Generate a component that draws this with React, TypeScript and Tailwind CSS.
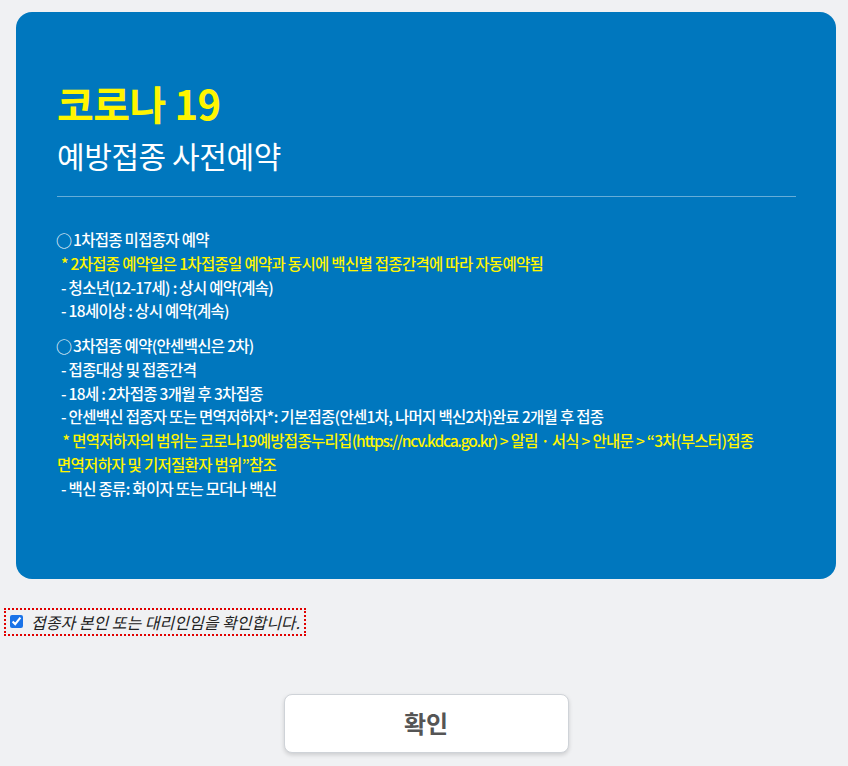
import React, { useState } from 'react';

const font = { fontFamily: '"Noto Sans CJK KR", "Noto Sans", sans-serif' };

function Circle() {
  return <span className="mr-px inline-block text-[16px] leading-none tracking-normal font-normal align-[-1px]">○</span>;
}

export default function App() {
  const [checked, setChecked] = useState(true);

  return (
    <div className="min-h-[766px] bg-[#f0f1f3] pt-3" style={font}>
      <div className="ml-4 mr-3 rounded-2xl bg-[#0077be] pl-[40px] pr-10 pt-[67px] pb-[79px]">
        <h1 className="pl-px text-[40px] font-bold leading-[48px] text-[#fff500] tracking-[-0.5px]">코로나 19</h1>
        <h2 className="mt-[8px] pl-px text-[30px] font-normal leading-[40px] text-white tracking-[-0.4px]">예방접종 사전예약</h2>
        <div className="ml-px mt-[21px] h-px bg-white/40" />

        <div className="mt-[31px] text-[15.5px] font-medium leading-[23.75px] tracking-[-0.7px] text-white">
          <p><Circle />1차접종 미접종자 예약</p>
          <p className="pl-[5px] text-[#fff500]">* 2차접종 예약일은 1차접종일 예약과 동시에 백신별 접종간격에 따라 자동예약됨</p>
          <p className="pl-[5px]">- 청소년(12-17세) : 상시 예약(계속)</p>
          <p className="pl-[5px]">- 18세이상 : 상시 예약(계속)</p>

          <p className="mt-[11px]"><Circle />3차접종 예약(안센백신은 2차)</p>
          <p className="pl-[5px]">- 접종대상 및 접종간격</p>
          <p className="pl-[5px]">- 18세 : 2차접종 3개월 후 3차접종</p>
          <p className="pl-[5px]">- 안센백신 접종자 또는 면역저하자*: 기본접종(안센1차, 나머지 백신2차)완료 2개월 후 접종</p>
          <p className="pl-px text-[#fff500]">
            &nbsp;&nbsp;* 면역저하자의 범위는 코로나19예방접종누리집<span className="tracking-[-1.2px]">(https://ncv.kdca.go.kr)</span> &gt; 알림 · 서식 &gt; 안내문 &gt; “3차(부스터)접종
            <br />
            면역저하자 및 기저질환자 범위”참조
          </p>
          <p className="pl-[5px]">- 백신 종류: 화이자 또는 모더나 백신</p>
        </div>
      </div>

      <div className="mt-[30px] pl-[6px]">
        <label className="inline-flex items-center gap-[8px] px-[4px] py-[2px] outline-2 outline-dotted outline-[#e00000]">
          <input
            type="checkbox"
            checked={checked}
            onChange={() => setChecked(!checked)}
            className="h-[13px] w-[13px] accent-[#1a73e8]"
          />
          <span className="text-[16px] italic leading-[20px] text-[#222]">접종자 본인 또는 대리인임을 확인합니다.</span>
        </label>
      </div>

      <div className="mt-[60px] flex justify-center">
        <button className="ml-[4px] h-[59px] w-[285px] rounded-lg border border-[#cfd3d8] bg-white text-[24px] font-bold text-[#555] shadow-[0_2px_4px_rgba(0,0,0,0.15)]">
          확인
        </button>
      </div>
    </div>
  );
}
